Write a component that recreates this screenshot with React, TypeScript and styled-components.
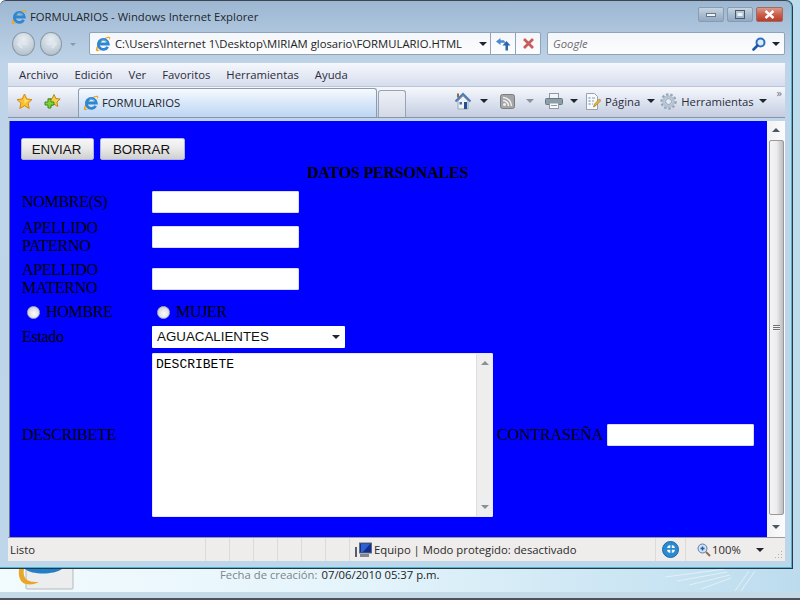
import React from 'react';
import styled, { createGlobalStyle } from 'styled-components';

const Global = createGlobalStyle`
	html, body { margin: 0; padding: 0; background: #cfe6f3; }
	* { box-sizing: border-box; }
`;

const UI = `"Open Sans", "Noto Sans", sans-serif`;

const Desktop = styled.div`
	width: 800px;
	height: 600px;
	overflow: hidden;
	display: flex;
	flex-direction: column;
	background: linear-gradient(90deg, #f2fbfe 0%, #e4f4fb 45%, #bcdcee 100%);
	border-bottom: 2px solid #4d5256;
`;

const Window = styled.div`
	width: 793px;
	height: 569px;
	flex: none;
	display: flex;
	flex-direction: column;
	padding: 1px 7px 0 8px;
	background: linear-gradient(180deg, #9db7d2 0%, #bfd4e8 11%, #bdd6ea 100%);
	border-top: 1px solid #3c4650;
	border-right: 1px solid #2b3a44;
	border-bottom: 1px solid #1f3a48;
	border-radius: 6px 7px 0 0;
	box-shadow: inset 0 -1px 0 #4fb2cf, inset -1px 0 0 #4fb2cf;
	font-family: ${UI};
	font-size: 11.3px;
	color: #1c1c1c;
`;

const TitleBar = styled.div`
	height: 28px;
	flex: none;
	display: flex;
	align-items: flex-end;
	justify-content: space-between;
	padding: 0 2px 5px 3px;
`;

const TitleText = styled.div`
	display: flex;
	align-items: center;
	gap: 3px;
	line-height: 16px;
	color: #20262c;
	white-space: nowrap;
`;

const Caps = styled.div`
	display: flex;
	gap: 3px;
	height: 15px;
	margin-bottom: 3px;
`;

const Cap = styled.div<{ $close?: boolean; $w: number }>`
	width: ${p => p.$w}px;
	display: flex;
	align-items: center;
	justify-content: center;
	border: 1px solid ${p => (p.$close ? '#a26a60' : '#8a9bae')};
	border-radius: 2px;
	background: ${p =>
		p.$close
			? 'linear-gradient(180deg, #d99a8a 0%, #c9604c 50%, #b83c2a 100%)'
			: 'linear-gradient(180deg, #c6d4e3 0%, #a9bdd2 50%, #93a9c2 100%)'};
`;

const NavRow = styled.div`
	height: 32px;
	flex: none;
	display: flex;
	align-items: flex-start;
	padding: 2px 0 0 4px;
`;

const Round = styled.div`
	width: 24px;
	height: 24px;
	margin-right: 5px;
	border-radius: 50%;
	border: 1px solid #8a9aaa;
	background: radial-gradient(circle at 50% 30%, #e9eef3 0%, #c6d1db 55%, #a8b6c4 100%);
	display: flex;
	align-items: center;
	justify-content: center;
`;

const NavDrop = styled.div`
	width: 0;
	height: 0;
	margin: 11px 13px 0 3px;
	border-left: 3px solid transparent;
	border-right: 3px solid transparent;
	border-top: 3px solid #8a97a4;
`;

const Field = styled.div<{ $w: number; $mr?: number }>`
	width: ${p => p.$w}px;
	height: 23px;
	margin-right: ${p => p.$mr ?? 0}px;
	display: flex;
	align-items: center;
	flex: none;
	background: linear-gradient(180deg, #f3f6fa 0%, #fdfdfe 100%);
	border: 1px solid #8fa4b8;
	border-radius: 2px;
`;

const AddressIcon = styled.span`
	display: flex;
	padding-left: 5px;
`;

const AddressText = styled.div`
	flex: 1;
	padding-left: 4px;
	white-space: nowrap;
	overflow: hidden;
	color: #222;
`;

const FieldBtn = styled.div`
	width: 25px;
	height: 100%;
	flex: none;
	display: flex;
	align-items: center;
	justify-content: center;
	border-left: 1px solid #8fa4b8;
`;

const Arrow = styled.span<{ $c?: string; $ml?: number; $mr?: number }>`
	display: inline-block;
	flex: none;
	width: 0;
	height: 0;
	margin: 0 ${p => p.$mr ?? 0}px 0 ${p => p.$ml ?? 0}px;
	border-left: 4px solid transparent;
	border-right: 4px solid transparent;
	border-top: 4px solid ${p => p.$c ?? '#1d2530'};
`;

const SearchText = styled.div`
	flex: 1;
	padding-left: 5px;
	font-style: italic;
	color: #6d6d6d;
`;

const MenuBar = styled.div`
	height: 23px;
	flex: none;
	margin-top: 1px;
	display: flex;
	align-items: center;
	gap: 16px;
	padding: 0 0 1px 11px;
	background: linear-gradient(180deg, #f5f7fc 0%, #d6dded 100%);
	color: #2b2b3b;
`;

const Toolbar = styled.div`
	height: 32px;
	flex: none;
	display: flex;
	align-items: flex-end;
	background: linear-gradient(180deg, #f6f8fc 0%, #dfe5f1 45%, #c4cde0 100%);
	border-top: 1px solid #bcc5d4;
	border-bottom: 1px solid #8b94a4;
	position: relative;
`;

const FavIcons = styled.div`
	width: 70px;
	height: 30px;
	flex: none;
	display: flex;
	align-items: center;
	gap: 11px;
	padding: 0 0 1px 8px;
`;

const Tab = styled.div`
	width: 299px;
	height: 29px;
	flex: none;
	display: flex;
	align-items: center;
	gap: 3px;
	padding: 0 0 1px 4px;
	background: linear-gradient(180deg, #f7fafe 0%, #dbe9fa 45%, #bcd6f2 100%);
	border: 1px solid #8b9bb0;
	border-bottom: none;
	border-radius: 3px 3px 0 0;
	color: #23262c;
`;

const NewTab = styled.div`
	width: 28px;
	height: 27px;
	flex: none;
	margin-left: 1px;
	background: linear-gradient(180deg, #eef1f7 0%, #d3d9e6 100%);
	border: 1px solid #9aa3b3;
	border-bottom: none;
	border-radius: 3px 3px 0 0;
`;

const ToolItems = styled.div`
	flex: 1;
	height: 30px;
	display: flex;
	align-items: center;
	padding: 0 0 2px 48px;
	color: #2b2b3b;
`;

const ToolLabel = styled.span`
	margin-left: 4px;
	white-space: nowrap;
`;

const Chevron = styled.span`
	position: absolute;
	right: 3px;
	top: 0;
	font-size: 11px;
	line-height: 11px;
	color: #6d7480;
`;

const Viewport = styled.div`
	height: 416px;
	flex: none;
	margin: 3px 0 0 1px;
	display: flex;
	border-left: 1px solid #6e7680;
	background: #fff;
`;

const Page = styled.form`
	flex: 1;
	height: 100%;
	background: #0000ff;
	padding: 17px 0 0 11px;
	font-family: "Liberation Serif", "Times New Roman", serif;
	font-size: 16px;
	line-height: 18px;
	letter-spacing: -0.3px;
	color: #000;
`;

const ScrollTrack = styled.div`
	width: 18px;
	flex: none;
	display: flex;
	flex-direction: column;
	align-items: center;
	background: linear-gradient(90deg, #f1f1f3 0%, #fbfbfd 100%);
`;

const ScrollArrow = styled.div<{ $up?: boolean }>`
	width: 0;
	height: 0;
	margin: ${p => (p.$up ? '7px 0 8px' : '10px 0 0')};
	border-left: 4px solid transparent;
	border-right: 4px solid transparent;
	${p => (p.$up ? 'border-bottom' : 'border-top')}: 4px solid #4c5560;
`;

const ScrollThumb = styled.div`
	width: 15px;
	height: 375px;
	display: flex;
	align-items: center;
	justify-content: center;
	border: 1px solid #9a9a9a;
	border-radius: 2px;
	background: linear-gradient(90deg, #f4f4f6 0%, #ececee 50%, #bdbdbd 100%);
`;

const Grip = styled.div`
	width: 7px;
	height: 6px;
	background: repeating-linear-gradient(180deg, #707070 0 1px, #f2f2f2 1px 2px);
`;

const Buttons = styled.div`
	display: flex;
	gap: 6px;
	height: 22px;
`;

const PushButton = styled.button<{ $w: number }>`
	width: ${p => p.$w}px;
	height: 22px;
	padding: 0 2px 0 0;
	font-family: "Liberation Sans", Arial, sans-serif;
	font-size: 13.33px;
	letter-spacing: 0;
	color: #111;
	border: 1px solid #b0b4d8;
	border-radius: 2px;
	background: linear-gradient(180deg, #f6f6f6 0%, #ebebeb 45%, #cfcfcf 100%);
`;

const Heading = styled.div`
	height: 18px;
	margin-top: 4px;
	padding-left: 286px;
	font-weight: bold;
	letter-spacing: -0.2px;
	white-space: nowrap;
`;

const Rows = styled.div`
	display: flex;
	flex-direction: column;
	margin-top: 9px;
	padding-left: 1px;
`;

const Row = styled.div<{ $h: number; $mb?: number }>`
	display: flex;
	align-items: center;
	height: ${p => p.$h}px;
	margin-bottom: ${p => p.$mb ?? 0}px;
	white-space: nowrap;
`;

const Label = styled.div`
	width: 130px;
	flex: none;
`;

const TextBox = styled.input`
	width: 147px;
	height: 22px;
	flex: none;
	padding: 0 4px;
	border: 1px solid #d8dcff;
	border-radius: 1px;
	background: #fff;
`;

const RadioCell = styled.label`
	width: 130px;
	flex: none;
	display: flex;
	align-items: center;
	gap: 6px;
	padding-left: 5px;
`;

const Radio = styled.span`
	width: 13px;
	height: 13px;
	flex: none;
	border-radius: 50%;
	border: 1px solid #a9aec0;
	background: radial-gradient(circle at 55% 60%, #fdfdfd 0%, #e2e2e6 50%, #bcbcc4 100%);
`;

const Picker = styled.div`
	width: 193px;
	height: 22px;
	display: flex;
	align-items: center;
	justify-content: space-between;
	padding: 0 5px;
	background: #fff;
	border-radius: 1px;
	font-family: "Liberation Sans", Arial, sans-serif;
	font-size: 13.33px;
	letter-spacing: 0;
	color: #111;
`;

const Memo = styled.div`
	width: 341px;
	height: 164px;
	flex: none;
	display: flex;
	margin-right: 4px;
	background: #fff;
	border-radius: 1px;
	border: 1px solid #e4e6ff;
`;

const MemoText = styled.div`
	flex: 1;
	padding: 3px;
	font-family: "Liberation Mono", "Courier New", monospace;
	font-size: 13px;
	line-height: 15px;
	letter-spacing: 0;
`;

const MemoScroll = styled.div`
	width: 16px;
	flex: none;
	display: flex;
	flex-direction: column;
	align-items: center;
	justify-content: space-between;
	padding: 7px 0;
	background: #eeeeee;
	border-left: 1px solid #dedede;
`;

const SmallArrow = styled.div<{ $up?: boolean }>`
	width: 0;
	height: 0;
	border-left: 4px solid transparent;
	border-right: 4px solid transparent;
	${p => (p.$up ? 'border-bottom' : 'border-top')}: 4px solid #8a8f96;
`;

const PasswordLabel = styled.span`
	margin-right: 4px;
	letter-spacing: -0.15px;
`;

const StatusBar = styled.div`
	height: 24px;
	flex: none;
	display: flex;
	align-items: center;
	position: relative;
	background: #efecec;
	border-top: 1px solid #9a9a9a;
	color: #2a2a2a;
`;

const StatusCell = styled.div<{ $w: number; $line?: boolean; $pl?: number; $gap?: number }>`
	width: ${p => p.$w}px;
	height: 100%;
	flex: none;
	display: flex;
	align-items: center;
	gap: ${p => p.$gap ?? 0}px;
	padding-left: ${p => p.$pl ?? 0}px;
	white-space: nowrap;
	${p => p.$line && 'border-left: 1px solid #dcdada;'}
`;

const GripDots = styled.span`
	position: absolute;
	right: 2px;
	bottom: 2px;
	display: flex;
`;

const Below = styled.div`
	flex: 1;
	display: flex;
	padding-left: 17px;
	font-family: ${UI};
	font-size: 11.3px;
	color: #7d8489;
	border-bottom: 6px solid #c6d9e6;
`;

const Tile = styled.div`
	width: 58px;
	height: 23px;
	flex: none;
	margin-right: 145px;
`;

const CreatedAt = styled.div`
	width: 445px;
	flex: none;
	white-space: nowrap;
	line-height: 11px;
`;

const CreatedValue = styled.span`
	color: #1d2226;
	margin-left: 4px;
`;

const IeLogo = () => (
	<svg width="16" height="16" viewBox="0 0 16 16">
		<path d="M15 1.300C13 -.400 7.500 3 4.500 6.500 2.200 9.200.300 12.800 1 14.600c.5 1.200 3 .7 5-.8-1.500.5-2.800.5-3.200-.2C2 12 4 8.500 7 5.600c2.600-2.500 5.800-4.200 7-3.300.5.400.4 1.200.1 2C15 3.300 15.700 2 15 1.300z" fill="#eda721" />
		<path d="M12.700 10.800A5 5 0 1 1 13.300 8H4.800" fill="none" stroke="#2f86d2" strokeWidth="2.800" />
		<path d="M6.500 4.600A4 4 0 0 1 12 6.300" fill="none" stroke="#6cc0f0" strokeWidth="1" />
	</svg>
);

const StarIcon = () => (
	<svg width="17" height="17" viewBox="0 0 17 17">
		<path d="M8.500 1l2.300 5 5.200.6-3.900 3.500 1.100 5.400-4.700-2.800-4.700 2.800 1.100-5.400L1 6.600 6.200 6z" fill="#fbc02c" stroke="#d08a1c" />
		<path d="M8.500 3.500l1.500 3.500 3 .4-3 1.600-1.500 2z" fill="#ffe27a" />
	</svg>
);

const AddFavIcon = () => (
	<svg width="17" height="17" viewBox="0 0 17 17">
		<path d="M10 1.500l1.800 4 4.400.5-3.300 3 .9 4.500L10 11.200l-3.800 2.300.9-4.500-3.300-3 4.400-.5z" fill="#f8cf4c" stroke="#b98a1e" />
		<path d="M4 6h3v3h3v3H7v3H4v-3H1V9h3z" fill="#7fd23a" stroke="#3c8a18" />
	</svg>
);

const HomeIcon = () => (
	<svg width="18" height="18" viewBox="0 0 18 18">
		<path d="M4 9l5-5 5 5v8H4z" fill="#eef1f5" stroke="#98a6b6" />
		<path d="M1.500 9.500L9 2l7.500 7.500" fill="none" stroke="#4f78ad" strokeWidth="2" />
		<rect x="10" y="10" width="3" height="7" fill="#264f8c" />
		<rect x="5.500" y="10" width="2.500" height="2.500" fill="#3e6ea8" />
		<rect x="3" y="1.500" width="2" height="4" fill="#8a6a4c" />
	</svg>
);

const RssIcon = () => (
	<svg width="15" height="15" viewBox="0 0 15 15">
		<rect x=".5" y=".5" width="14" height="14" rx="2" fill="#a3a5a6" stroke="#7b7d7e" />
		<circle cx="4.500" cy="10.500" r="1.500" fill="#f1f1f1" />
		<path d="M3 6.500a5.500 5.500 0 0 1 5.500 5.500M3 3.500a8.500 8.500 0 0 1 8.500 8.500" fill="none" stroke="#f1f1f1" strokeWidth="1.500" />
	</svg>
);

const PrintIcon = () => (
	<svg width="18" height="16" viewBox="0 0 18 16">
		<rect x="4.500" y=".5" width="9" height="5" fill="#f2f4f7" stroke="#8f9aa6" />
		<rect x=".5" y="5.500" width="17" height="6" rx="1" fill="#8aa0a8" stroke="#6c7880" />
		<rect x="4.500" y="10" width="9" height="5.500" fill="#fbfbfb" stroke="#8f9aa6" />
		<rect x="6" y="12" width="6" height="1" fill="#8f9aa6" />
	</svg>
);

const PageIcon = () => (
	<svg width="16" height="17" viewBox="0 0 16 17">
		<path d="M1.500.5h8l3 3v13h-11z" fill="#f8f9fb" stroke="#98a2ae" />
		<path d="M3.500 5h2M3.500 8h2M3.500 11h2" stroke="#3f86c7" strokeWidth="1.200" />
		<path d="M7 5h3M7 8h2M7 11h1" stroke="#8f9aa6" />
		<path d="M8.500 14l1-3 5-5 1.500 1.500-5 5z" fill="#e8b93c" stroke="#9b7a22" strokeWidth=".7" />
	</svg>
);

const GearIcon = () => (
	<svg width="17" height="17" viewBox="0 0 17 17">
		<circle cx="8.500" cy="8.500" r="6.800" fill="none" stroke="#95a6b8" strokeWidth="2.800" strokeDasharray="2.400 1.800" />
		<circle cx="8.500" cy="8.500" r="5" fill="none" stroke="#b5c2d0" strokeWidth="2.400" />
		<circle cx="8.500" cy="8.500" r="3" fill="#e4ecf3" stroke="#8da0b2" />
	</svg>
);

const RefreshIcon = () => (
	<svg width="15" height="14" viewBox="0 0 15 14">
		<path d="M0 4.500L4.500 1v2.300H8l1.500 2.400h-5V8z" fill="#4a8ad2" />
		<path d="M10.500 4L14.500 8.500h-2.500V13.500H9.500V8.500H6.500z" fill="#2c64ad" />
	</svg>
);

const CloseIcon = () => (
	<svg width="13" height="13" viewBox="0 0 13 13">
		<path d="M2 2l9 9M11 2l-9 9" stroke="#c95c5c" strokeWidth="2.800" />
	</svg>
);

const LensIcon = () => (
	<svg width="14" height="14" viewBox="0 0 14 14">
		<circle cx="8.500" cy="5.500" r="4" fill="#dcebfa" stroke="#2f6fc0" strokeWidth="2" />
		<path d="M5.500 8.500L1.500 12.500" stroke="#1f57a2" strokeWidth="2.600" strokeLinecap="round" />
	</svg>
);

const MonitorIcon = () => (
	<svg width="17" height="16" viewBox="0 0 17 16">
		<rect x="4.500" y="1" width="12" height="10" fill="#10308c" stroke="#5e6c80" />
		<path d="M6 2h9L8 10H6z" fill="#2f5fd0" />
		<rect x="0" y="5" width="2" height="10" fill="#55606c" />
		<rect x="5" y="12" width="9" height="3" fill="#7d8894" />
	</svg>
);

const ProtectIcon = () => (
	<svg width="17" height="17" viewBox="0 0 17 17">
		<circle cx="8.500" cy="8.500" r="8" fill="#2b8ad0" stroke="#1c6aa8" />
		<circle cx="9" cy="8" r="4" fill="#f2f8fd" />
		<rect x="3" y="7" width="11" height="1.800" fill="#2b8ad0" />
		<rect x="8.300" y="3" width="1.500" height="9" fill="#2b8ad0" />
	</svg>
);

const ZoomIcon = () => (
	<svg width="14" height="14" viewBox="0 0 14 14">
		<circle cx="5.500" cy="5.500" r="4.500" fill="#cfe2f6" stroke="#5a7ea8" />
		<path d="M3.500 5.500h4M5.500 3.500v4" stroke="#2a5a9c" strokeWidth="1.400" />
		<path d="M9 9l4 4" stroke="#8a6f58" strokeWidth="2" />
	</svg>
);

const NavArrow = ({ flip }: { flip?: boolean }) => (
	<svg width="12" height="10" viewBox="0 0 12 10" style={flip ? { transform: 'scaleX(-1)' } : undefined}>
		<path d="M1 5h9M5 1L1 5l4 4" fill="none" stroke="#dfe6ed" strokeWidth="2" />
	</svg>
);

export default function App() {
	return (
		<Desktop>
			<Global />
			<Window>
				<TitleBar>
					<TitleText>
						<IeLogo />
						FORMULARIOS - Windows Internet Explorer
					</TitleText>
					<Caps>
						<Cap $w={26}>
							<svg width="10" height="4" viewBox="0 0 10 4"><rect x=".5" y=".5" width="9" height="3" fill="#eef3f8" stroke="#6a7684" /></svg>
						</Cap>
						<Cap $w={26}>
							<svg width="10" height="9" viewBox="0 0 10 9"><rect x=".5" y=".5" width="9" height="8" fill="none" stroke="#4c5866" /><rect x="2.500" y="3" width="5" height="3" fill="#eef3f8" /></svg>
						</Cap>
						<Cap $w={27} $close>
							<svg width="11" height="9" viewBox="0 0 11 9"><path d="M1.500 1l8 7M9.500 1l-8 7" stroke="#fff" strokeWidth="2.400" /></svg>
						</Cap>
					</Caps>
				</TitleBar>
				<NavRow>
					<Round><NavArrow /></Round>
					<Round><NavArrow flip /></Round>
					<NavDrop />
					<Field $w={452} $mr={6}>
						<AddressIcon><IeLogo /></AddressIcon>
						<AddressText>C:\Users\Internet 1\Desktop\MIRIAM glosario\FORMULARIO.HTML</AddressText>
						<Arrow $ml={5} $mr={3} />
						<FieldBtn><RefreshIcon /></FieldBtn>
						<FieldBtn><CloseIcon /></FieldBtn>
					</Field>
					<Field $w={238}>
						<SearchText>Google</SearchText>
						<LensIcon />
						<Arrow $ml={6} $mr={4} />
					</Field>
				</NavRow>
				<MenuBar>
					<span>Archivo</span>
					<span>Edición</span>
					<span>Ver</span>
					<span>Favoritos</span>
					<span>Herramientas</span>
					<span>Ayuda</span>
				</MenuBar>
				<Toolbar>
					<FavIcons>
						<StarIcon />
						<AddFavIcon />
					</FavIcons>
					<Tab>
						<IeLogo />
						FORMULARIOS
					</Tab>
					<NewTab />
					<ToolItems>
						<HomeIcon />
						<Arrow $ml={8} $mr={12} />
						<RssIcon />
						<Arrow $ml={11} $mr={11} $c="#8b929c" />
						<PrintIcon />
						<Arrow $ml={7} $mr={7} />
						<PageIcon />
						<ToolLabel>Página</ToolLabel>
						<Arrow $ml={7} $mr={5} />
						<GearIcon />
						<ToolLabel>Herramientas</ToolLabel>
						<Arrow $ml={5} />
					</ToolItems>
					<Chevron>»</Chevron>
				</Toolbar>
				<Viewport>
					<Page>
						<Buttons>
							<PushButton type="button" $w={73}>ENVIAR</PushButton>
							<PushButton type="button" $w={85}>BORRAR</PushButton>
						</Buttons>
						<Heading>DATOS PERSONALES</Heading>
						<Rows>
							<Row $h={22} $mb={6}>
								<Label>NOMBRE(S)</Label>
								<TextBox />
							</Row>
							<Row $h={36} $mb={6}>
								<Label>APELLIDO<br />PATERNO</Label>
								<TextBox />
							</Row>
							<Row $h={36} $mb={6}>
								<Label>APELLIDO<br />MATERNO</Label>
								<TextBox />
							</Row>
							<Row $h={18} $mb={5}>
								<RadioCell><Radio />HOMBRE</RadioCell>
								<RadioCell><Radio />MUJER</RadioCell>
							</Row>
							<Row $h={22} $mb={5}>
								<Label>Estado</Label>
								<Picker>AGUACALIENTES<Arrow /></Picker>
							</Row>
							<Row $h={164}>
								<Label>DESCRIBETE</Label>
								<Memo>
									<MemoText>DESCRIBETE</MemoText>
									<MemoScroll>
										<SmallArrow $up />
										<SmallArrow />
									</MemoScroll>
								</Memo>
								<PasswordLabel>CONTRASEÑA</PasswordLabel>
								<TextBox type="password" />
							</Row>
						</Rows>
					</Page>
					<ScrollTrack>
						<ScrollArrow $up />
						<ScrollThumb><Grip /></ScrollThumb>
						<ScrollArrow />
					</ScrollTrack>
				</Viewport>
				<StatusBar>
					<StatusCell $w={197} $pl={2}>Listo</StatusCell>
					<StatusCell $w={24} $line />
					<StatusCell $w={24} $line />
					<StatusCell $w={24} $line />
					<StatusCell $w={24} $line />
					<StatusCell $w={24} $line />
					<StatusCell $w={24} $line />
					<StatusCell $w={306} $line $pl={5} $gap={2}>
						<MonitorIcon />
						Equipo | Modo protegido: desactivado
					</StatusCell>
					<StatusCell $w={30} $line $pl={6}>
						<ProtectIcon />
					</StatusCell>
					<StatusCell $w={101} $line $pl={11} $gap={1}>
						<ZoomIcon />
						100%
						<Arrow $ml={14} />
					</StatusCell>
					<GripDots>
						<svg width="8" height="8" viewBox="0 0 8 8">
							<path d="M6 0h1v1H6zM3 3h1v1H3zM6 3h1v1H6zM0 6h1v1H0zM3 6h1v1H3zM6 6h1v1H6z" fill="#a9b0b8" />
						</svg>
					</GripDots>
				</StatusBar>
			</Window>
			<Below>
				<Tile>
					<svg width="58" height="23" viewBox="0 0 58 23">
						<rect x="9" y="-2" width="47" height="22" rx="1" fill="#ecedee" stroke="#b4b9bd" />
						<path d="M2 0c-1 9 2 14 7 15 5 1 9 0 13-2-5 0-10 0-13-3C7 8 6 4 7 0z" fill="#e9a628" />
						<path d="M8 0c3 3 11 4.500 18 4.500S41 3 45 0z" fill="#1f7fc8" />
					</svg>
				</Tile>
				<CreatedAt>
					Fecha de creación:
					<CreatedValue>07/06/2010 05:37 p.m.</CreatedValue>
				</CreatedAt>
				<svg width="90" height="23" viewBox="0 0 90 23">
					<path d="M0 8L60 0M12 12L62 3M24 16L65 6M36 20L66 9M70 22L84 2M76 22L90 2" stroke="#e2f0f8" strokeWidth="1" fill="none" />
				</svg>
			</Below>
		</Desktop>
	);
}
